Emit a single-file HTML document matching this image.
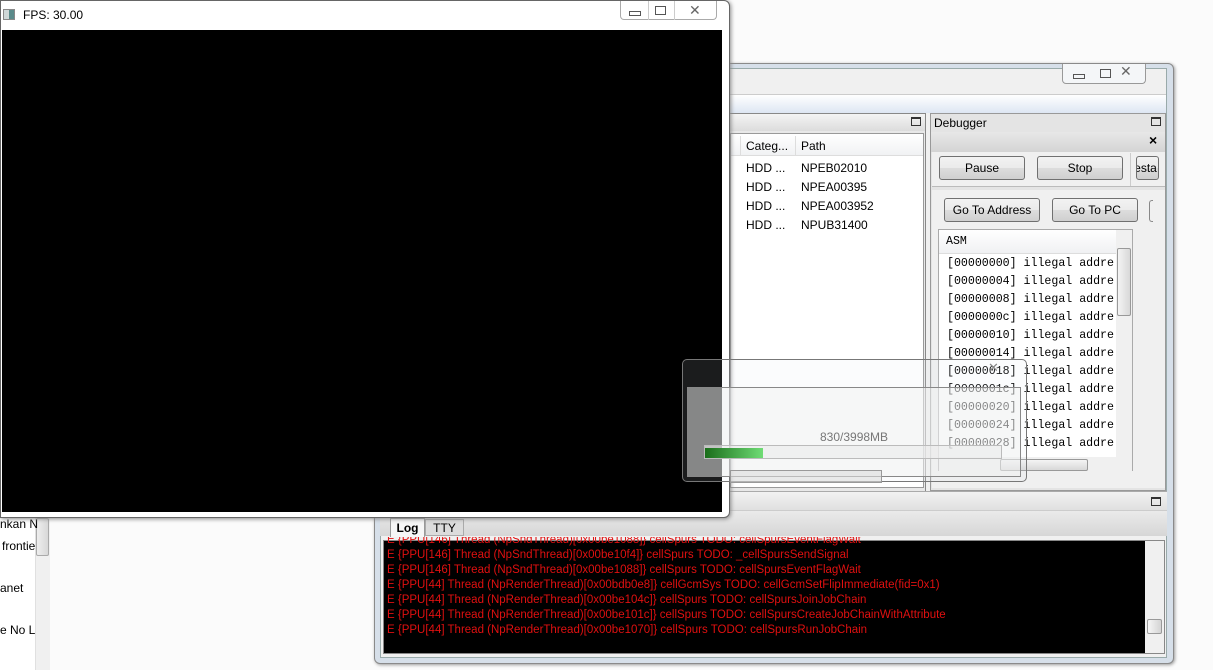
<!DOCTYPE html>
<html><head><meta charset="utf-8"><style>
*{box-sizing:border-box;margin:0;padding:0}
body{width:1213px;height:670px;position:relative;overflow:hidden;background:#fbfbfb;font-family:"Liberation Sans",sans-serif;font-size:12px;color:#000}
.a{position:absolute}
.btn{position:absolute;border:1px solid #707070;border-radius:3px;background:linear-gradient(#f2f2f2,#ebebeb 50%,#dddddd 51%,#cfcfcf);text-align:center;line-height:22px;font-size:12px}
.mono{font-family:"Liberation Mono",monospace;font-size:11.6px}
.log div{color:#e01010;font-size:11.5px;height:15px;line-height:15px;white-space:nowrap}
</style></head><body>
<!-- left background list -->
<div class="a" style="left:0;top:510px;width:50px;height:160px;background:#fff"></div>
<div class="a" style="left:35px;top:510px;width:15px;height:160px;background:#f0f0f0;border-left:1px solid #e0e0e0"></div>
<div class="a" style="left:36px;top:518px;width:13px;height:38px;background:linear-gradient(90deg,#eee,#d8d8d8);border:1px solid #aaa;border-radius:2px"></div>
<div class="a" style="left:0;top:517px;font-size:12px">nkan N</div>
<div class="a" style="left:2px;top:539px;font-size:12px">frontie</div>
<div class="a" style="left:0;top:581px;font-size:12px">anet</div>
<div class="a" style="left:0;top:623px;font-size:12px">e No L</div>

<!-- main window -->
<div class="a" style="left:374px;top:63px;width:800px;height:601px;background:#d6dfe9;border:1px solid #8a8a8a;border-radius:6px;box-shadow:1px 1px 3px #999"></div>
<div class="a" style="left:380px;top:68px;width:787px;height:590px;background:#f0f0f0;border:1px solid #9aa"></div>
<div class="a" style="left:1062px;top:64px;width:84px;height:20px;border:1px solid #999;border-top:none;border-radius:0 0 4px 4px;background:#f4f6f8"></div>
<div class="a" style="left:1073px;top:74px;width:12px;height:5px;border:1px solid #555"></div>
<div class="a" style="left:1100px;top:69px;width:11px;height:9px;border:1px solid #555"></div>
<div class="a" style="left:1120px;top:63px;font-size:14px;color:#666">✕</div>
<div class="a" style="left:720px;top:94px;width:446px;height:19px;background:linear-gradient(#fff,#dde6f3);border-top:1px solid #ccc"></div>
<!-- game list -->
<div class="a" style="left:726px;top:113px;width:200px;height:380px;background:#e8e8e8;border:1px solid #888"></div>
<div class="a" style="left:727px;top:114px;width:198px;height:17px;background:linear-gradient(#f4f4f4,#dcdcdc)"></div>
<div class="a" style="left:911px;top:117px;width:10px;height:9px;border:1px solid #333;border-top-width:2px"></div>
<div class="a" style="left:730px;top:133px;width:194px;height:355px;background:#fff;border:1px solid #999"></div>
<div class="a" style="left:731px;top:134px;width:192px;height:22px;background:linear-gradient(#fff,#f1f2f4);border-bottom:1px solid #ddd"></div>
<div class="a" style="left:740px;top:136px;width:1px;height:20px;background:#ddd"></div>
<div class="a" style="left:795px;top:136px;width:1px;height:20px;background:#ddd"></div>
<div class="a" style="left:746px;top:139px">Categ...</div><div class="a" style="left:801px;top:139px">Path</div>
<div class="a" style="left:746px;top:159px;line-height:19px">HDD ...<br>HDD ...<br>HDD ...<br>HDD ...</div>
<div class="a" style="left:801px;top:159px;line-height:19px">NPEB02010<br>NPEA00395<br>NPEA003952<br>NPUB31400</div>
<!-- debugger -->
<div class="a" style="left:930px;top:113px;width:236px;height:378px;background:#e4e4e4;border:1px solid #999"></div>
<div class="a" style="left:934px;top:116px">Debugger</div>
<div class="a" style="left:1151px;top:117px;width:10px;height:9px;border:1px solid #333;border-top-width:2px"></div>
<div class="a" style="left:931px;top:132px;width:234px;height:20px;background:linear-gradient(#e8e8e8,#d4d4d4)"></div>
<div class="a" style="left:1149px;top:132px;font-size:14px;font-weight:bold">×</div>
<div class="a" style="left:932px;top:152px;width:233px;height:35px;background:#f0f0f0;border-bottom:1px solid #bbb"></div>
<div class="btn" style="left:939px;top:156px;width:86px;height:24px">Pause</div>
<div class="btn" style="left:1037px;top:156px;width:86px;height:24px">Stop</div>
<div class="a" style="left:1130px;top:153px;width:1px;height:33px;background:#ccc"></div>
<div class="btn" style="left:1136px;top:156px;width:23px;height:24px;overflow:hidden;text-indent:-4px">esta</div>
<div class="a" style="left:932px;top:190px;width:233px;height:298px;background:#f0f0f0"></div>
<div class="btn" style="left:944px;top:198px;width:96px;height:24px">Go To Address</div>
<div class="btn" style="left:1052px;top:198px;width:86px;height:24px">Go To PC</div>
<div class="a" style="left:1149px;top:200px;width:4px;height:22px;border:1px solid #888;border-right:none;border-radius:3px 0 0 3px"></div>
<div class="a" style="left:938px;top:229px;width:195px;height:242px;background:#fff;border:1px solid #aaa;overflow:hidden"></div>
<div class="a mono" style="left:939px;top:230px;width:177px;height:24px;line-height:24px;padding-left:7px;background:linear-gradient(#fff,#f0f1f3);border-bottom:1px solid #ddd">ASM</div>
<div class="a mono" style="left:947px;top:255px;line-height:18px;white-space:pre">[00000000] illegal addre
[00000004] illegal addre
[00000008] illegal addre
[0000000c] illegal addre
[00000010] illegal addre
[00000014] illegal addre
[00000018] illegal addre
[0000001c] illegal addre
[00000020] illegal addre
[00000024] illegal addre
[00000028] illegal addre</div>
<div class="a" style="left:1116px;top:230px;width:16px;height:227px;background:#f0f0f0"></div>
<div class="a" style="left:1117px;top:248px;width:14px;height:68px;background:linear-gradient(90deg,#f4f4f4,#d8d8d8);border:1px solid #999;border-radius:2px"></div>
<div class="a" style="left:939px;top:457px;width:193px;height:14px;background:#f0f0f0"></div>
<div class="a" style="left:1000px;top:459px;width:88px;height:12px;background:linear-gradient(#f4f4f4,#d8d8d8);border:1px solid #999;border-radius:2px"></div>
<!-- bottom log panel -->
<div class="a" style="left:380px;top:491px;width:787px;height:20px;background:linear-gradient(#f2f2f2,#e0e0e0);border-top:1px solid #aaa;border-bottom:1px solid #ccc"></div>
<div class="a" style="left:1151px;top:497px;width:10px;height:9px;border:1px solid #333;border-top-width:2px"></div>
<div class="a" style="left:380px;top:511px;width:787px;height:25px;background:linear-gradient(#eaeaea,#d6d6d6)"></div>
<div class="a" style="left:390px;top:518px;width:35px;height:19px;background:#f6f6f6;border:1px solid #999;border-bottom:none;font-weight:bold;text-align:center;line-height:18px">Log</div>
<div class="a" style="left:425px;top:519px;width:39px;height:17px;background:#dcdcdc;border:1px solid #aaa;text-align:center;line-height:16px">TTY</div>
<div class="a" style="left:383px;top:540px;width:782px;height:114px;border:1px solid #888;background:#000"></div>
<div class="a log" style="left:387px;top:537px;height:115px;overflow:hidden;width:758px"><div style="margin-top:-4px">E {PPU[146] Thread (NpSndThread)[0x00be1088]} cellSpurs TODO: cellSpursEventFlagWait</div>
<div>E {PPU[146] Thread (NpSndThread)[0x00be10f4]} cellSpurs TODO: _cellSpursSendSignal</div>
<div>E {PPU[146] Thread (NpSndThread)[0x00be1088]} cellSpurs TODO: cellSpursEventFlagWait</div>
<div>E {PPU[44] Thread (NpRenderThread)[0x00bdb0e8]} cellGcmSys TODO: cellGcmSetFlipImmediate(fid=0x1)</div>
<div>E {PPU[44] Thread (NpRenderThread)[0x00be104c]} cellSpurs TODO: cellSpursJoinJobChain</div>
<div>E {PPU[44] Thread (NpRenderThread)[0x00be101c]} cellSpurs TODO: cellSpursCreateJobChainWithAttribute</div>
<div>E {PPU[44] Thread (NpRenderThread)[0x00be1070]} cellSpurs TODO: cellSpursRunJobChain</div></div>
<div class="a" style="left:1145px;top:541px;width:19px;height:112px;background:#f0f0f0"></div>
<div class="a" style="left:1147px;top:619px;width:15px;height:15px;background:linear-gradient(90deg,#f6f6f6,#d4d4d4);border:1px solid #999;border-radius:2px"></div>

<!-- FPS window -->
<div class="a" style="left:0;top:0;width:730px;height:518px;background:#fff;border:1px solid #666;border-radius:0 6px 6px 0;box-shadow:1px 1px 4px #888"></div>
<div class="a" style="left:3px;top:9px;width:12px;height:11px;border:1px solid #888;background:linear-gradient(90deg,#cfd8d8 50%,#5a8a8a 50%)"></div>
<div class="a" style="left:23px;top:8px">FPS: 30.00</div>
<div class="a" style="left:620px;top:1px;width:97px;height:19px;border:1px solid #aaa;border-top:none;border-radius:0 0 4px 4px"></div>
<div class="a" style="left:648px;top:1px;width:1px;height:19px;background:#ccc"></div>
<div class="a" style="left:674px;top:1px;width:1px;height:19px;background:#ccc"></div>
<div class="a" style="left:629px;top:11px;width:12px;height:5px;border:1px solid #555"></div>
<div class="a" style="left:655px;top:6px;width:11px;height:9px;border:1px solid #555"></div>
<div class="a" style="left:689px;top:2px;font-size:14px;color:#666">✕</div>
<div class="a" style="left:2px;top:30px;width:720px;height:482px;background:#000"></div>

<!-- progress dialog (on top) -->
<div class="a" style="left:682px;top:359px;width:345px;height:123px;border:1px solid #777;border-radius:5px;background:rgba(225,232,240,0.12)"></div>
<div class="a" style="left:687px;top:387px;width:334px;height:90px;background:rgba(242,242,242,0.5);border:1px solid #888"></div>
<div class="a" style="left:820px;top:430px;color:#777">830/3998MB</div>
<div class="a" style="left:704px;top:445px;width:298px;height:14px;border:1px solid #bbb;background:rgba(235,235,235,0.6)"></div>
<div class="a" style="left:705px;top:448px;width:58px;height:10px;background:linear-gradient(90deg,#1a6d1a,#6fdc75)"></div>
<div class="a" style="left:730px;top:470px;width:152px;height:13px;border:1px solid #999;background:rgba(220,220,220,0.6)"></div>
<div class="a" style="left:988px;top:360px;font-size:13px;color:#888">✕</div>
</body></html>
